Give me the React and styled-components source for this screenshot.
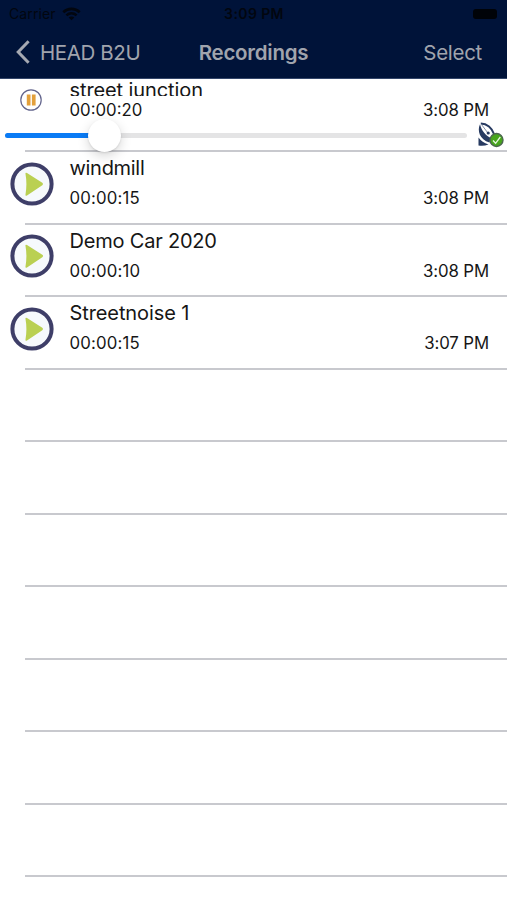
import styled, { createGlobalStyle } from 'styled-components'

const recordings = [
	{ name: 'windmill', duration: '00:00:15', time: '3:08 PM', nameSpacing: '-0.3px' },
	{ name: 'Demo Car 2020', duration: '00:00:10', time: '3:08 PM', nameSpacing: '-0.2px' },
	{ name: 'Streetnoise 1', duration: '00:00:15', time: '3:07 PM', nameSpacing: '-0.1px' },
]

const emptyRows = [1, 2, 3, 4, 5, 6, 7, 8]

const WifiIcon = () => (
	<svg width='19' height='14' viewBox='0 0 19 14' fill='none' stroke='#02060f' strokeWidth='2.6'>
		<path d='M1.3 5.2C6 .7 13 .7 17.7 5.2' />
		<path d='M4.4 8.4c3-2.8 7.2-2.8 10.2 0' />
		<path d='M9.5 13.3 6.7 10.5c1.6-1.4 4-1.4 5.6 0Z' fill='#02060f' stroke='none' />
	</svg>
)

const BackIcon = () => (
	<svg width='14' height='24' viewBox='0 0 14 24' fill='none' stroke='#a5a9b2' strokeWidth='3'>
		<path d='M12.6 1.3 2.2 12 12.6 22.7' />
	</svg>
)

const PlayIcon = () => (
	<svg width='44' height='44' viewBox='0 0 44 44'>
		<circle cx='22' cy='22' r='19.6' fill='#f6f9fc' stroke='#3e3e68' strokeWidth='4' />
		<path
			d='M17 11 32.300 20.800q1.600 1.200 0 2.400L17 33.500q-1.900 1-1.500-1.100c1.200-6.800 1.200-13.500 0-20.300Q15.100 10 17 11Z'
			fill='#bad052'
		/>
	</svg>
)

const PauseIcon = () => (
	<svg width='22' height='22' viewBox='0 0 22 22'>
		<circle cx='11' cy='11' r='10.2' fill='#fff' stroke='#62648c' strokeWidth='1.2' />
		<path d='M6.800 5.500h3.700v11H6.800zM11.900 5.500h3.700v11h-3.700z' fill='#e3a03c' />
	</svg>
)

const DishIcon = () => (
	<svg width='28' height='26' viewBox='0 0 28 26'>
		<path d='M3 2.2C0 8.500 2.500 17.500 12.500 20.500L14 16C8.500 13.500 4.500 8.500 3 2.200Z' fill='#273a61' />
		<path d='M3.800 1.500C10 1.500 15 6 17 12' fill='none' stroke='#273a61' strokeWidth='2' />
		<path d='M4.500 2.500 10.500 10.500' stroke='#8490a8' strokeWidth='1' />
		<circle cx='11.200' cy='11' r='1.600' fill='#273a61' />
		<path d='M1.500 15.500V23.500Q6.500 24.500 11.500 22.500Q5 20.500 1.500 15.500Z' fill='#273a61' />
		<circle cx='19.500' cy='18' r='6.500' fill='#47a51c' stroke='#4c6650' strokeWidth='1.400' />
		<path d='m16 18.500 2.600 2.800 4.700-6.300' fill='none' stroke='#e6f6df' strokeWidth='1.300' />
	</svg>
)

const App = () => {
	return (
		<>
			<GlobalStyle />
			<Screen>
				<Header>
					<StatusBar>
						<Carrier>
							<span>Carrier</span>
							<WifiIcon />
						</Carrier>
						<Clock>3:09 PM</Clock>
						<Battery />
					</StatusBar>
					<NavBar>
						<BackButton>
							<BackIcon />
							<span>HEAD B2U</span>
						</BackButton>
						<Title>Recordings</Title>
						<SelectButton>Select</SelectButton>
					</NavBar>
				</Header>
				<PlayingRow>
					<PlayingTop>
						<PauseButton aria-label='Pause'>
							<PauseIcon />
						</PauseButton>
						<PlayingInfo>
							<ClippedName>street junction</ClippedName>
							<Details>
								<Duration>00:00:20</Duration>
								<span>3:08 PM</span>
							</Details>
						</PlayingInfo>
					</PlayingTop>
					<Player>
						<Track>
							<Played />
							<Thumb />
						</Track>
						<DishIcon />
					</Player>
					<Separator />
				</PlayingRow>
				{recordings.map((item) => (
					<Row key={item.name}>
						<RowBody>
							<PlayButton aria-label='Play'>
								<PlayIcon />
							</PlayButton>
							<Info>
								<Name $spacing={item.nameSpacing}>{item.name}</Name>
								<Details>
									<Duration $wide>{item.duration}</Duration>
									<span>{item.time}</span>
								</Details>
							</Info>
						</RowBody>
						<Separator />
					</Row>
				))}
				{emptyRows.map((row) => (
					<Row key={row}>
						<RowBody />
						<Separator />
					</Row>
				))}
			</Screen>
		</>
	)
}
export default App

const GlobalStyle = createGlobalStyle`
	* {
		box-sizing: border-box;
	}
	body {
		margin: 0;
		background: #fff;
		overflow: hidden;
	}
	button {
		border: none;
		padding: 0;
		background: none;
		font: inherit;
		color: inherit;
		cursor: pointer;
	}
	svg {
		display: block;
		flex: none;
	}
`

const Screen = styled.main`
	width: 507px;
	height: 900px;
	overflow: hidden;
	background: #fff;
	color: #161616;
	font-family: Inter, 'Liberation Sans', sans-serif;
`

const Header = styled.header`
	height: 79px;
	background: #001339;
	border-bottom: 1px solid #33466a;
`

const StatusBar = styled.div`
	display: grid;
	grid-template-columns: 1fr auto 1fr;
	align-items: center;
	height: 27px;
	padding: 0 10px 0 9px;
	font-size: 14px;
	line-height: 27px;
	color: #02060f;
`

const Carrier = styled.div`
	display: flex;
	align-items: center;
	gap: 6px;
	letter-spacing: 0.1px;
`

const Clock = styled.div`
	padding-left: 2px;
	font-weight: 600;
	letter-spacing: 0.4px;
`

const Battery = styled.div`
	justify-self: end;
	width: 24px;
	height: 10px;
	border-radius: 3px;
	background: #000308;
`

const NavBar = styled.nav`
	display: grid;
	grid-template-columns: 1fr auto 1fr;
	align-items: center;
	height: 50px;
	padding: 0 25px 0 16px;
	font-size: 20.5px;
	color: #a0a4ad;
`

const BackButton = styled.button`
	display: flex;
	align-items: center;
	gap: 10px;
	letter-spacing: -0.4px;
`

const Title = styled.h1`
	margin: 0 0 0 9px;
	font-size: 20.5px;
	font-weight: 600;
	letter-spacing: -0.25px;
`

const SelectButton = styled.button`
	justify-self: end;
	letter-spacing: -0.3px;
`

const Separator = styled.div`
	height: 2px;
	margin-left: 25px;
	background: #c8c9ce;
`

const PlayingRow = styled.section`
	height: 73px;
`

const PlayingTop = styled.div`
	display: flex;
	height: 41px;
`

const PauseButton = styled.button`
	flex: none;
	width: 69.5px;
	height: 22px;
	padding-left: 20px;
	margin-top: 10px;
`

const PlayingInfo = styled.div`
	flex: 1;
	padding: 2px 18px 0 0;
`

const Name = styled.div`
	font-size: 20px;
	line-height: 24px;
	letter-spacing: ${({ $spacing }) => $spacing || '-0.1px'};
	white-space: nowrap;
`

const ClippedName = styled(Name)`
	height: 15px;
	line-height: 18px;
	overflow: hidden;
`

const Details = styled.div`
	display: flex;
	justify-content: space-between;
	font-size: 16.8px;
	line-height: 28px;
	letter-spacing: -0.1px;
`

const Duration = styled.span`
	letter-spacing: ${({ $wide }) => ($wide ? '0.15px' : '0')};
`

const Player = styled.div`
	display: flex;
	align-items: center;
	justify-content: space-between;
	height: 30px;
	padding: 0 2px 0 5px;
`

const Track = styled.div`
	display: flex;
	align-items: center;
	width: 462px;
	height: 5px;
	border-radius: 3px;
	background: #e4e4e5;
`

const Played = styled.div`
	width: 85px;
	height: 5px;
	border-radius: 3px 0 0 3px;
	background: #0a7bf5;
`

const Thumb = styled.div`
	flex: none;
	width: 33px;
	height: 33px;
	margin-left: -2px;
	border-radius: 50%;
	background: #fff;
	box-shadow: 0 4px 12px rgba(0, 0, 0, 0.16), 0 1px 2px rgba(0, 0, 0, 0.1);
`

const Row = styled.section`
	height: 72.5px;
`

const RowBody = styled.div`
	display: flex;
	height: 70.5px;
`

const PlayButton = styled.button`
	flex: none;
	width: 69.5px;
	height: 44px;
	padding-left: 9.5px;
	margin-top: 9.5px;
`

const Info = styled.div`
	flex: 1;
	padding: 4px 18px 0 0;

	${Details} {
		margin-top: 4px;
	}
`
